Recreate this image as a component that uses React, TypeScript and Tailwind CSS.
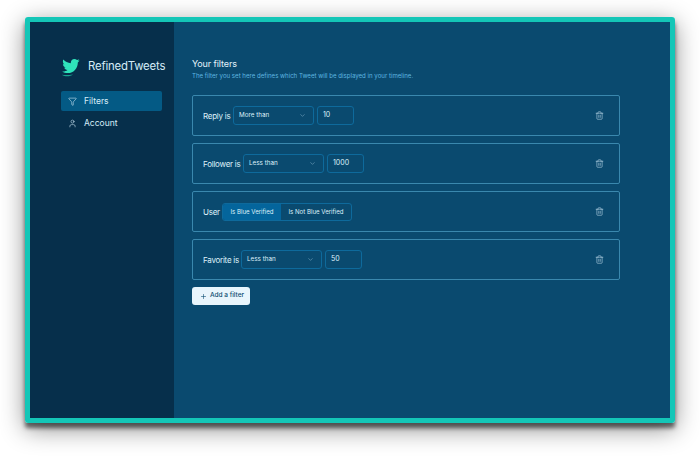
import { Filter, User, ChevronDown, Trash2, Plus } from "lucide-react";

const font = { fontFamily: "Inter, sans-serif" };

function Card({ children }: { children: React.ReactNode }) {
  return (
    <div className="flex h-[41px] items-center rounded-[2px] border border-[#3a88ae] pl-[10px] pr-[15px]">
      <div className="flex flex-1 items-center">{children}</div>
      <Trash2 size={9} strokeWidth={1.4} className="text-[#cfe8f5]" />
    </div>
  );
}

function SelectRow({ label, labelW, value, input }: { label: string; labelW: string; value: string; input: string }) {
  return (
    <>
      <span className={`${labelW} whitespace-nowrap text-[8px] tracking-[-0.25px] text-[#dff1fa]`}>{label}</span>
      <div className="flex h-[19px] w-[81px] items-center justify-between rounded-[3px] border border-[#0e6a9c] pl-[5px] pr-[7px] text-[6.3px] text-[#dff1fa]">
        <span>{value}</span>
        <ChevronDown size={7} strokeWidth={1.5} className="text-[#9cc6dc]" />
      </div>
      <div className="ml-[3px] flex h-[19px] w-[37px] items-center rounded-[3px] border border-[#0e6a9c] pl-[5px] text-[7px] text-[#dff1fa]">{input}</div>
    </>
  );
}

export default function App() {
  return (
    <div style={font} className="h-[456px] w-[700px] overflow-hidden bg-white px-[25px] pt-[17px]">
      <div className="flex h-[406px] w-[650px] overflow-hidden rounded-[3px] border-[5px] border-[#14c6b7] shadow-[0_5px_4px_rgba(0,0,0,0.55),0_6px_24px_rgba(0,0,0,0.45)]">
        <aside className="w-[144px] shrink-0 bg-[#062f4b] pl-[31px] pr-[12px] pt-[35px]">
          <div className="flex h-[20px] items-center">
            <svg width="19" height="19" viewBox="0 0 24 24" className="shrink-0">
              <path fill="#1aa08f" d="M1 21c2 1.300 4.400 2 6.900 2 3 0 5.400-.9 7.300-2.300C10 21.500 5 21.800 1 21z" />
              <path fill="#2fe3bb" d="M23.600 3.200c-.9.4-1.500.6-2.500.8.900-.6 1.600-1.400 1.900-2.500-.9.500-1.700.9-2.800 1.100-.8-.9-2-1.400-3.300-1.400-2.500 0-4.500 2-4.500 4.500 0 .4 0 .7.1 1C8.700 6.500 5.300 4.700 3 2c-.4.700-.6 1.400-.6 2.300 0 1.600.8 3 2 3.800-.7 0-1.400-.2-2-.6v.1c0 2.200 1.600 4 3.600 4.400-.4.100-.8.200-1.200.2-.3 0-.6 0-.8-.1.600 1.800 2.200 3.100 4.200 3.100-1.500 1.200-3.500 1.900-5.600 1.900-.4 0-.7 0-1.100-.1 2 1.300 4.400 2 6.900 2 8.300 0 12.800-6.800 12.800-12.800v-.6c.9-.6 1.700-1.400 2.400-2.400z" />
            </svg>
            <span className="ml-[8px] whitespace-nowrap text-[11.4px] tracking-[-0.2px] text-[#d4ecf8]">RefinedTweets</span>
          </div>
          <nav className="mt-[14px] flex flex-col gap-[2px]">
            <div className="flex h-[20px] items-center rounded-[2px] bg-[#045a85] pl-[7px] text-[#d4ecf8]">
              <Filter size={9} strokeWidth={1.5} />
              <span className="ml-[7px] text-[8.5px]">Filters</span>
            </div>
            <div className="flex h-[20px] items-center pl-[7px] text-[#d4ecf8]">
              <User size={9} strokeWidth={1.5} />
              <span className="ml-[7px] text-[8.5px]">Account</span>
            </div>
          </nav>
        </aside>
        <main className="flex-1 bg-[#0a4a6f] pl-[18px] pr-[50px] pt-[36px]">
          <h1 className="text-[9px] leading-[12px] tracking-[-0.1px] text-[#e3f3fb]">Your filters</h1>
          <p className="mt-[1px] text-[6.1px] leading-[10px] text-[#5fb7e0]">The filter you set here defines which Tweet will be displayed in your timeline.</p>
          <div className="mt-[14px] flex flex-col gap-[7px]">
            <Card><SelectRow label="Reply is" labelW="w-[30px]" value="More than" input="10" /></Card>
            <Card><SelectRow label="Follower is" labelW="w-[40px]" value="Less than" input="1000" /></Card>
            <Card>
              <span className="w-[19px] text-[8px] tracking-[-0.25px] text-[#dff1fa]">User</span>
              <div className="flex h-[18px] w-[130px] overflow-hidden rounded-[3px] border border-[#0e6a9c] text-[6.1px] text-[#dff1fa]">
                <div className="flex w-[58px] items-center justify-center bg-[#04659c]">Is Blue Verified</div>
                <div className="flex flex-1 items-center justify-center">Is Not Blue Verified</div>
              </div>
            </Card>
            <Card><SelectRow label="Favorite is" labelW="w-[38px]" value="Less than" input="50" /></Card>
          </div>
          <button className="mt-[7px] flex h-[18px] w-[58px] items-center rounded-[3px] bg-[#e8f5fc] pl-[8px] text-[6.5px] font-medium text-[#0a4a6f]">
            <Plus size={7} strokeWidth={2} />
            <span className="ml-[3px]">Add a filter</span>
          </button>
        </main>
      </div>
    </div>
  );
}
